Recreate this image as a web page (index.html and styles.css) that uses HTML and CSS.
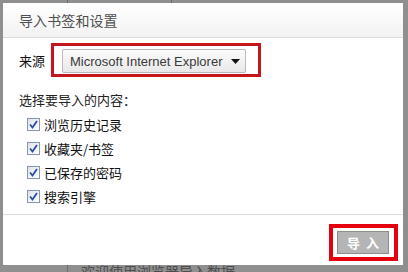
FILE: index.html
```html
<!DOCTYPE html>
<html lang="zh">
<head>
<meta charset="utf-8">
<link rel="stylesheet" href="styles.css">
</head>
<body>
<div class="backdrop">
  <div class="bg-button">Add new user</div>
  <div class="bg-text">欢迎使用浏览器导入数据</div>
</div>
<div class="dialog">
  <div class="dialog-header">导入书签和设置</div>
  <div class="dialog-body">
    <div class="source-row">
      <span class="source-label">来源</span>
      <span class="highlight">
        <span class="select">
          <span class="select-text">Microsoft Internet Explorer</span>
          <svg class="select-arrow" width="9" height="5" viewBox="0 0 9 5"><path d="M0 0H9L4.5 5Z" fill="#111"/></svg>
        </span>
      </span>
    </div>
    <div class="section-title">选择要导入的内容：</div>
    <ul class="options">
      <li class="option"><span class="check"><svg width="9" height="9" viewBox="0 0 9 9"><path d="M1 4.5L3.5 7.5L8 1" fill="none" stroke="#2a4fa8" stroke-width="1.8"/></svg></span>浏览历史记录</li>
      <li class="option"><span class="check"><svg width="9" height="9" viewBox="0 0 9 9"><path d="M1 4.5L3.5 7.5L8 1" fill="none" stroke="#2a4fa8" stroke-width="1.8"/></svg></span>收藏夹/书签</li>
      <li class="option"><span class="check"><svg width="9" height="9" viewBox="0 0 9 9"><path d="M1 4.5L3.5 7.5L8 1" fill="none" stroke="#2a4fa8" stroke-width="1.8"/></svg></span>已保存的密码</li>
      <li class="option"><span class="check"><svg width="9" height="9" viewBox="0 0 9 9"><path d="M1 4.5L3.5 7.5L8 1" fill="none" stroke="#2a4fa8" stroke-width="1.8"/></svg></span>搜索引擎</li>
    </ul>
  </div>
  <div class="dialog-footer">
    <span class="btn-highlight"><button class="btn-import">导&nbsp;&nbsp;入</button></span>
  </div>
</div>
</body>
</html>
```

FILE: styles.css
```css
html, body {
  margin: 0;
  padding: 0;
}
body {
  width: 408px;
  height: 272px;
  overflow: hidden;
  background: #8f8f8f;
  font-family: "Noto Sans CJK SC", "Liberation Sans", sans-serif;
  position: relative;
}
.backdrop {
  position: absolute;
  inset: 0;
}
.bg-button {
  position: absolute;
  left: 67px;
  top: -14px;
  width: 103px;
  height: 17px;
  border-left: 1px solid #6e6e6e;
  border-right: 1px solid #6e6e6e;
  color: #4a4a4a;
  font-family: "Liberation Sans", sans-serif;
  font-size: 15px;
  text-align: center;
  line-height: 17px;
}
.bg-text {
  position: absolute;
  left: 67px;
  top: 262px;
  padding-left: 13px;
  border-left: 1px solid #6e6e6e;
  color: #4d4d4d;
  font-size: 14px;
  line-height: 18px;
}
.dialog {
  position: absolute;
  left: 3px;
  top: 3px;
  width: 400px;
  height: 262px;
  background: #fff;
  display: flex;
  flex-direction: column;
}
.dialog-header {
  height: 35px;
  box-sizing: border-box;
  border-bottom: 1px solid #dcdcdc;
  background: linear-gradient(#ffffff, #f2f2f2);
  padding-left: 16px;
  font-size: 14px;
  line-height: 34px;
  color: #4f4f4f;
  letter-spacing: 0.1px;
}
.dialog-body {
  flex: 1;
  padding: 5px 0 0 16px;
  border-bottom: 1px solid #dedede;
}
.source-row {
  display: flex;
  align-items: center;
  gap: 6px;
}
.source-label {
  font-size: 13px;
  color: #111;
}
.highlight {
  display: inline-flex;
  border: 3px solid #c4161c;
  padding: 3px 12px 1px 8px;
}
.select {
  display: flex;
  align-items: center;
  justify-content: space-between;
  width: 184px;
  height: 24px;
  box-sizing: border-box;
  border: 1px solid #b9b9b9;
  border-radius: 2px;
  background: linear-gradient(#fbfbfb, #e9e9e9);
  padding: 0 5px 0 7px;
}
.select-text {
  font-family: "Liberation Sans", sans-serif;
  font-size: 13px;
  color: #3a3a3a;
}
.section-title {
  margin-top: 13px;
  font-size: 13px;
  color: #222;
  line-height: 20px;
}
.options {
  list-style: none;
  margin: 2px 0 0 0;
  padding: 0 0 0 8px;
}
.option {
  display: flex;
  align-items: center;
  gap: 4px;
  height: 24px;
  font-size: 13px;
  color: #111;
}
.check {
  width: 13px;
  height: 13px;
  box-sizing: border-box;
  border: 1px solid #8796ad;
  background: linear-gradient(135deg, #dfe3ea, #ffffff);
  display: flex;
  align-items: center;
  justify-content: center;
}
.dialog-footer {
  height: 50px;
  display: flex;
  justify-content: flex-end;
  align-items: center;
  padding-right: 5px;
  padding-top: 4px;
  box-sizing: border-box;
}
.btn-highlight {
  display: inline-flex;
  border: 4px solid #e5000f;
  padding: 3px 5px 3px 4px;
}
.btn-import {
  width: 52px;
  height: 23px;
  margin: 0;
  border: 1px solid #8d8d8d;
  background: #b5b5b5;
  color: #fff;
  font-family: "Noto Sans CJK SC", sans-serif;
  font-size: 13px;
  font-weight: bold;
  padding: 0;
}
```
